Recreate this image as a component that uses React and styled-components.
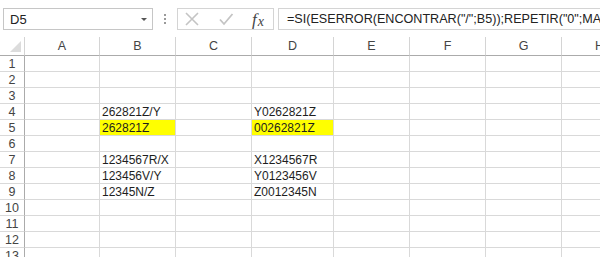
import React from 'react'
import styled, { createGlobalStyle } from 'styled-components'

const GlobalStyle = createGlobalStyle`
  html, body {
    margin: 0;
    padding: 0;
    background: #ffffff;
    overflow: hidden;
  }
  body {
    font-family: "Liberation Sans", Arial, sans-serif;
  }
`;

const columns = [
  { key: 'A', width: 75 },
  { key: 'B', width: 76 },
  { key: 'C', width: 76 },
  { key: 'D', width: 82 },
  { key: 'E', width: 76 },
  { key: 'F', width: 76 },
  { key: 'G', width: 76 },
  { key: 'H', width: 76 },
];

const cells = {
  B4: { text: '262821Z/Y' },
  B5: { text: '262821Z', fill: true },
  B7: { text: '1234567R/X' },
  B8: { text: '123456V/Y' },
  B9: { text: '12345N/Z' },
  D4: { text: 'Y0262821Z' },
  D5: { text: '00262821Z', fill: true },
  D7: { text: 'X1234567R' },
  D8: { text: 'Y0123456V' },
  D9: { text: 'Z0012345N' },
};

const rowCount = 13;

const App = () => {
  return (
    <Page>
      <GlobalStyle />
      <Toolbar>
        <NameBox>
          <NameText>D5</NameText>
          <DropArrow />
        </NameBox>
        <Grip>
          <Dot />
          <Dot />
          <Dot />
        </Grip>
        <ButtonBox>
          <svg width="16" height="16" viewBox="0 0 16 16">
            <path d="M2 2 L14 14 M14 2 L2 14" stroke="#c4c4c4" strokeWidth="1.6" fill="none" />
          </svg>
          <svg width="16" height="16" viewBox="0 0 16 16">
            <path d="M2 8.5 L6 13 L14.5 3" stroke="#c4c4c4" strokeWidth="1.8" fill="none" />
          </svg>
          <Fx>
            <i>f</i><FxSub>x</FxSub>
          </Fx>
        </ButtonBox>
        <FormulaBox>
          =SI(ESERROR(ENCONTRAR("/";B5));REPETIR("0";MAX(0;9-LARGO(B5)))&amp;B5;DERECHA(B5;1)&amp;REPETIR("0";MAX(0;8-LARGO(IZQUIERDA(B5;HALLAR("/";B5)-1))))&amp;IZQUIERDA(B5;HALLAR("/";B5)-1))
        </FormulaBox>
      </Toolbar>

      <Sheet>
        <Corner>
          <CornerTriangle />
        </Corner>
        {columns.map((col) => (
          <ColHeader key={col.key}>{col.key}</ColHeader>
        ))}
        {Array.from({ length: rowCount }, (_, i) => i + 1).map((row) => (
          <React.Fragment key={row}>
            <RowHeader>{row}</RowHeader>
            {columns.map((col) => {
              const cell = cells[col.key + row];
              return (
                <Cell key={col.key} $fill={cell && cell.fill}>
                  {cell ? cell.text : ''}
                </Cell>
              );
            })}
          </React.Fragment>
        ))}
      </Sheet>
    </Page>
  );
};

// Styled Components
const Page = styled.div`
  width: 600px;
  height: 257px;
  overflow: hidden;
  background: #ffffff;
`;

const Toolbar = styled.div`
  display: flex;
  align-items: center;
  height: 22px;
  padding: 8px 0 7px 3px;
`;

const NameBox = styled.div`
  display: flex;
  align-items: center;
  justify-content: space-between;
  box-sizing: border-box;
  width: 150px;
  height: 22px;
  border: 1px solid #c6c6c6;
  padding: 0 5px 0 6px;
`;

const NameText = styled.span`
  font-size: 13px;
  color: #222;
`;

const DropArrow = styled.span`
  width: 0;
  height: 0;
  border-left: 3px solid transparent;
  border-right: 3px solid transparent;
  border-top: 3px solid #555;
  margin-top: 1px;
`;

const Grip = styled.div`
  display: flex;
  flex-direction: column;
  align-items: center;
  gap: 2px;
  width: 24px;
`;

const Dot = styled.span`
  width: 2px;
  height: 2px;
  background: #9a9a9a;
`;

const ButtonBox = styled.div`
  display: flex;
  align-items: center;
  justify-content: space-between;
  box-sizing: border-box;
  width: 97px;
  height: 22px;
  border: 1px solid #d4d4d4;
  padding: 0 9px 0 6px;
`;

const Fx = styled.span`
  font-family: "Liberation Serif", "Times New Roman", serif;
  font-style: italic;
  font-size: 17px;
  color: #444;
  line-height: 1;
`;

const FxSub = styled.span`
  font-size: 14px;
  position: relative;
  top: 1px;
  margin-left: 1px;
`;

const FormulaBox = styled.div`
  flex: 1;
  box-sizing: border-box;
  height: 22px;
  margin-left: 4px;
  border: 1px solid #d4d4d4;
  border-right: none;
  padding: 0 0 0 8px;
  font-size: 12.6px;
  line-height: 20px;
  color: #222;
  white-space: nowrap;
  overflow: hidden;
`;

const Sheet = styled.div`
  display: grid;
  grid-template-columns: 25px ${columns.map((c) => c.width + 'px').join(' ')};
  grid-template-rows: 19px repeat(${rowCount}, 16px);
  font-size: 12px;
`;

const Corner = styled.div`
  position: relative;
  box-sizing: border-box;
  border-right: 1px solid #d4d4d4;
  border-bottom: 1px solid #ababab;
`;

const CornerTriangle = styled.span`
  position: absolute;
  right: 3px;
  bottom: 3px;
  width: 0;
  height: 0;
  border-left: 11px solid transparent;
  border-bottom: 11px solid #dcdcdc;
`;

const ColHeader = styled.div`
  box-sizing: border-box;
  display: flex;
  align-items: center;
  justify-content: center;
  border-right: 1px solid #d4d4d4;
  border-bottom: 1px solid #ababab;
  font-size: 12.5px;
  color: #444;
`;

const RowHeader = styled.div`
  box-sizing: border-box;
  display: flex;
  align-items: center;
  justify-content: center;
  border-right: 1px solid #ababab;
  border-bottom: 1px solid #d9d9d9;
  font-size: 12.5px;
  color: #444;
`;

const Cell = styled.div`
  box-sizing: border-box;
  display: flex;
  align-items: center;
  padding: 0 0 0 2px;
  border-right: 1px solid #d9d9d9;
  border-bottom: 1px solid #d9d9d9;
  background: ${(p) => (p.$fill ? '#ffff00' : 'transparent')};
  color: #1e1e1e;
  white-space: nowrap;
  overflow: hidden;
`;

export default App;
